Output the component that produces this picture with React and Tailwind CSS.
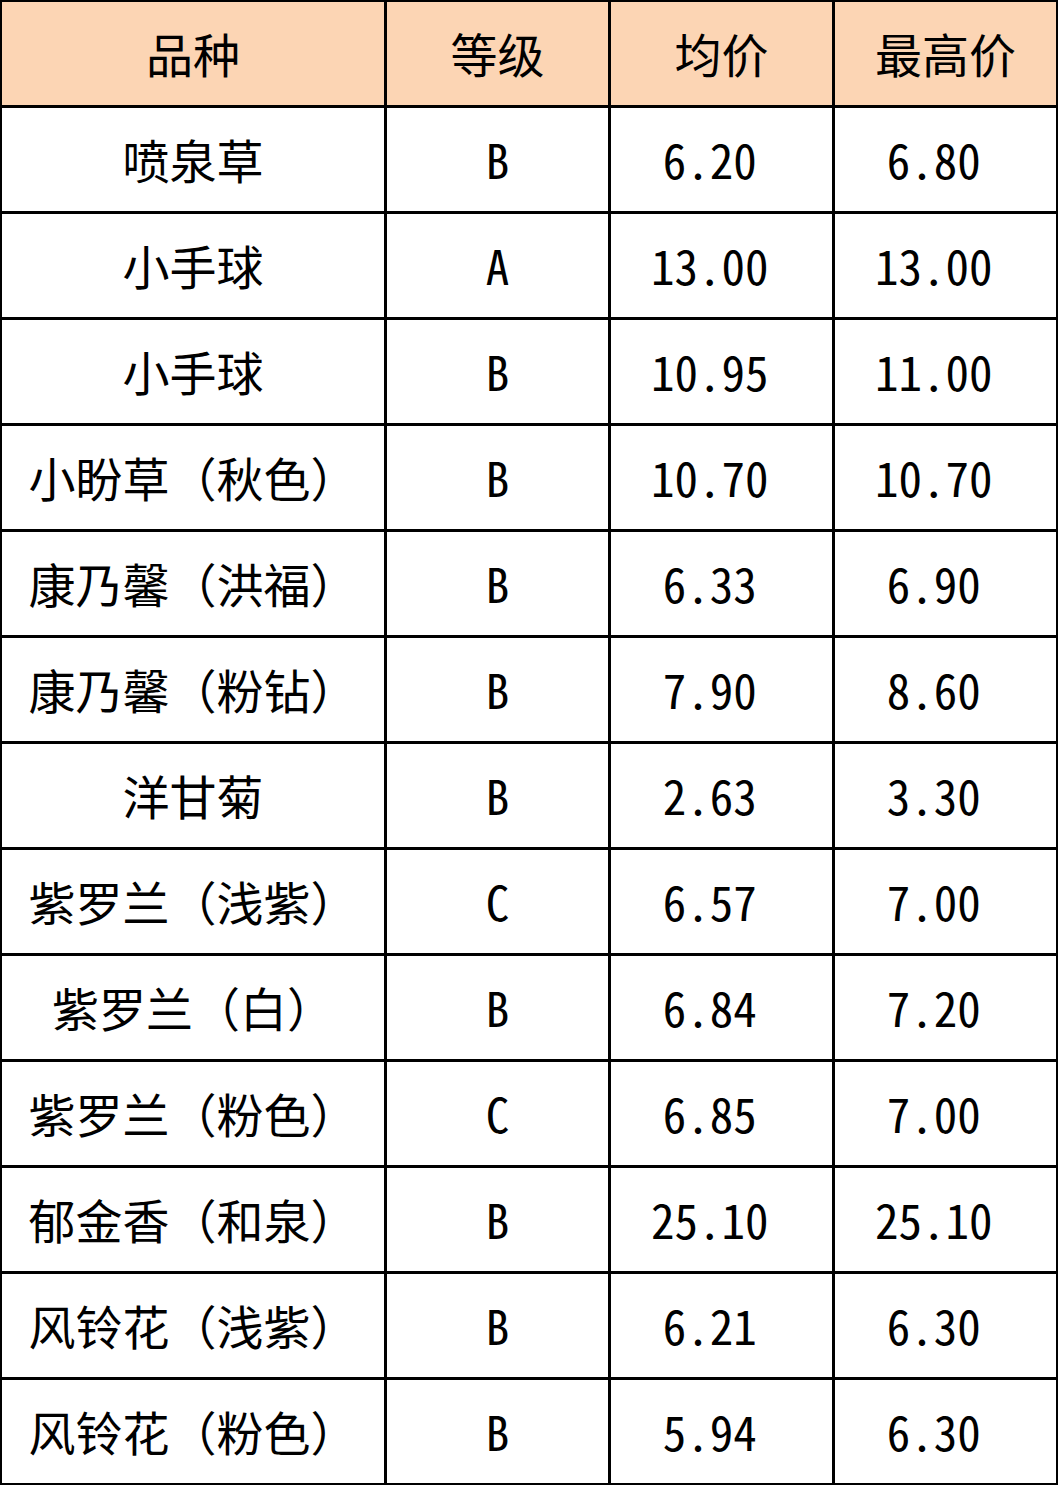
const rows = [
  ["喷泉草", "B", "6.20", "6.80"],
  ["小手球", "A", "13.00", "13.00"],
  ["小手球", "B", "10.95", "11.00"],
  ["小盼草（秋色）", "B", "10.70", "10.70"],
  ["康乃馨（洪福）", "B", "6.33", "6.90"],
  ["康乃馨（粉钻）", "B", "7.90", "8.60"],
  ["洋甘菊", "B", "2.63", "3.30"],
  ["紫罗兰（浅紫）", "C", "6.57", "7.00"],
  ["紫罗兰（白）", "B", "6.84", "7.20"],
  ["紫罗兰（粉色）", "C", "6.85", "7.00"],
  ["郁金香（和泉）", "B", "25.10", "25.10"],
  ["风铃花（浅紫）", "B", "6.21", "6.30"],
  ["风铃花（粉色）", "B", "5.94", "6.30"],
];

const cell = "flex items-center justify-center whitespace-pre";

export default function App() {
  return (
    <div className="w-[1058px] h-[1485px] bg-black p-[2px] font-['Noto_Sans_CJK_SC',sans-serif] text-[47px] text-black">
      <div className="grid h-full grid-cols-[382px_221px_221px_221px] auto-rows-[103px] gap-[3px]">
        {["品种", "等级", "均价", "最高价"].map((h) => (
          <div key={h} className={`${cell} bg-[#FCD5B4]`}>
            {h}
          </div>
        ))}
        {rows.map((r, i) => (
          <React.Fragment key={i}>
            <div className={`${cell} bg-white`}>{r[0]}</div>
            <div className={`${cell} bg-white font-['Noto_Sans_Mono_CJK_SC','Noto_Sans_CJK_SC',monospace]`}>{r[1]}</div>
            <div className={`${cell} bg-white font-['Noto_Sans_Mono_CJK_SC','Noto_Sans_CJK_SC',monospace]`}>{r[2] + " "}</div>
            <div className={`${cell} bg-white font-['Noto_Sans_Mono_CJK_SC','Noto_Sans_CJK_SC',monospace]`}>{r[3] + " "}</div>
          </React.Fragment>
        ))}
      </div>
    </div>
  );
}

import React from "react";
